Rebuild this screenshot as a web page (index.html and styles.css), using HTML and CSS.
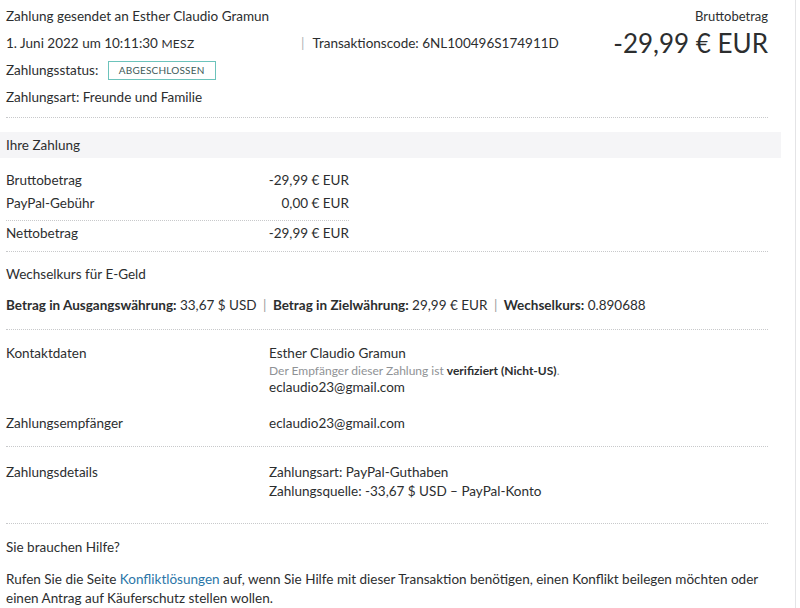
FILE: index.html
```html
<!DOCTYPE html>
<html lang="de">
<head>
<meta charset="utf-8">
<link rel="stylesheet" href="styles.css">
</head>
<body>
<div class="page">
  <section class="header">
    <div class="header-left">
      <div class="line">Zahlung gesendet an Esther Claudio Gramun</div>
      <div class="line meta">
        <span class="date">1. Juni 2022 um 10:11:30 <span class="caps">MESZ</span></span>
        <span class="sep">|</span>
        <span>Transaktionscode: 6NL100496S174911D</span>
      </div>
      <div class="line">Zahlungsstatus: <span class="badge">ABGESCHLOSSEN</span></div>
      <div class="line">Zahlungsart: Freunde und Familie</div>
    </div>
    <div class="header-right">
      <div class="gross-label">Bruttobetrag</div>
      <div class="gross-amount">-29,99 € EUR</div>
    </div>
  </section>
  <hr class="dots">
  <div class="band">Ihre Zahlung</div>
  <section class="sums">
    <div class="sum-row"><span>Bruttobetrag</span><span>-29,99 € EUR</span></div>
    <div class="sum-row"><span>PayPal-Gebühr</span><span>0,00 € EUR</span></div>
    <hr class="dots short">
    <div class="sum-row net"><span>Nettobetrag</span><span>-29,99 € EUR</span></div>
  </section>
  <hr class="dots">
  <section class="rate">
    <div class="rate-title">Wechselkurs für E-Geld</div>
    <div class="rate-line"><b>Betrag in Ausgangswährung:</b> 33,67 $ USD <span class="pipe">|</span> <b>Betrag in Zielwährung:</b> 29,99 € EUR <span class="pipe">|</span> <b>Wechselkurs:</b> 0.890688</div>
  </section>
  <hr class="dots">
  <section class="details">
    <div class="drow contact">
      <div class="dlabel">Kontaktdaten</div>
      <div class="dvalue">
        <div>Esther Claudio Gramun</div>
        <div class="note">Der Empfänger dieser Zahlung ist <b>verifiziert (Nicht-US)</b>.</div>
        <div>eclaudio23@gmail.com</div>
      </div>
    </div>
    <div class="drow recip">
      <div class="dlabel">Zahlungsempfänger</div>
      <div class="dvalue">eclaudio23@gmail.com</div>
    </div>
  </section>
  <hr class="dots">
  <section class="details">
    <div class="drow pay">
      <div class="dlabel">Zahlungsdetails</div>
      <div class="dvalue">
        <div>Zahlungsart: PayPal-Guthaben</div>
        <div>Zahlungsquelle: -33,67 $ USD – PayPal-Konto</div>
      </div>
    </div>
  </section>
  <hr class="dots">
  <section class="help">
    <div class="help-title">Sie brauchen Hilfe?</div>
    <p class="help-text">Rufen Sie die Seite <a href="#">Konfliktlösungen</a> auf, wenn Sie Hilfe mit dieser Transaktion benötigen, einen Konflikt beilegen möchten oder einen Antrag auf Käuferschutz stellen wollen.</p>
  </section>
</div>
</body>
</html>
```
FILE: styles.css
```css
html, body {
  margin: 0;
  padding: 0;
  background: #fff;
}
body {
  font-family: "Lato", "Open Sans", sans-serif;
  font-size: 13.5px;
  color: #2c2e2f;
  width: 800px;
  height: 608px;
  overflow: hidden;
}
.page {
  width: 796px;
  height: 608px;
  border-right: 1px solid #e4e4e6;
  box-sizing: border-box;
}
.header {
  display: flex;
  justify-content: space-between;
  padding: 3px 27px 0 6px;
}
.header-left .line {
  line-height: 27px;
  height: 27px;
}
.meta {
  display: flex;
  width: 560px;
}
.meta .date { width: 295px; }
.caps { font-size: 12px; letter-spacing: 0.3px; }
.meta .sep { color: #b0b3b6; margin-right: 8px; }
.badge {
  display: inline-block;
  margin-left: 6px;
  padding: 0 10px;
  height: 17px;
  line-height: 17px;
  border: 1px solid #6cc3bb;
  font-size: 10px;
  color: #3e5a58;
  letter-spacing: 0.2px;
  vertical-align: 1px;
}
.header-right {
  text-align: right;
}
.gross-label {
  font-size: 13px;
  line-height: 27px;
}
.gross-amount {
  font-size: 26px;
  line-height: 26px;
  color: #2c2e2f;
}
.dots {
  border: 0;
  border-top: 1px dotted #c8c9cb;
  margin: 0 27px 0 6px;
  height: 0;
}
.header + .dots { margin-top: 6px; }
.band {
  margin: 14px 14px 0 0;
  height: 26px;
  line-height: 26px;
  background: #f5f5f7;
  padding-left: 6px;
}
.sums {
  width: 343px;
  padding: 11px 0 6px 6px;
}
.sum-row {
  display: flex;
  justify-content: space-between;
  line-height: 23px;
}
.dots.short {
  margin: 5px 0 1px 0;
}
.rate { padding: 11px 0 12px 6px; }
.rate-title { line-height: 23px; }
.rate-line { line-height: 23px; margin-top: 8px; }
.rate-line b { font-weight: 700; }
.pipe { color: #9a9c9e; margin: 0 3px; }
.details { padding: 15px 0 14px 6px; }
.drow { display: flex; }
.dlabel { width: 263px; line-height: 17px; }
.dvalue { line-height: 17px; }
.note { font-size: 12px; color: #8f9295; }
.note b { color: #2c2e2f; font-weight: 700; }
.recip { margin-top: 19px; }
.details .pay .dlabel, .details .pay .dvalue { line-height: 19px; }
.pay { margin-top: 1px; margin-bottom: 8px; }
.help { padding: 14px 0 0 6px; }
.help-title { line-height: 19px; }
.help-text {
  margin: 13px 0 0;
  line-height: 19px;
  width: 766px;
}
.help-text a { color: #2b76a8; text-decoration: none; }
```
